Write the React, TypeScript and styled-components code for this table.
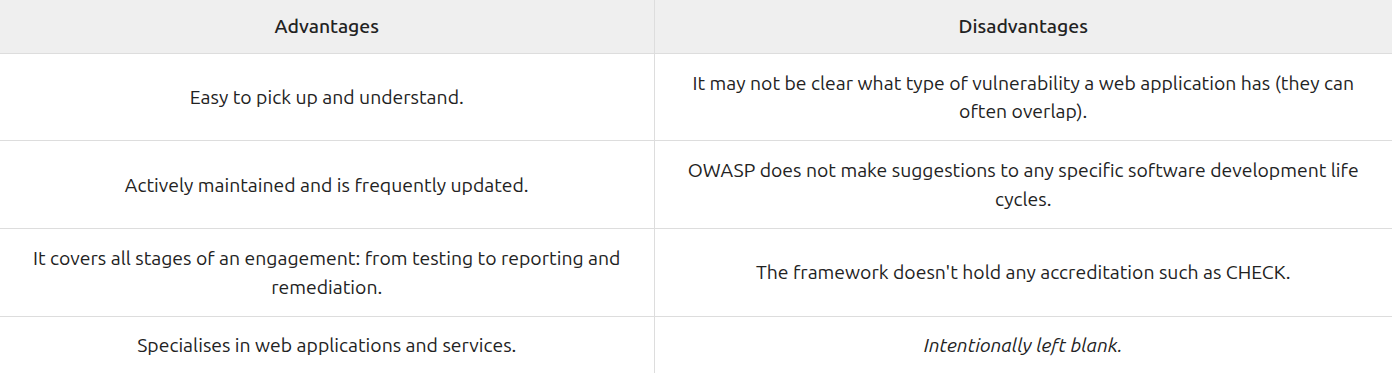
import React, { FC } from "react";
import styled, { createGlobalStyle } from "styled-components";

const GlobalStyle = createGlobalStyle`
  body {
    margin: 0;
    background: #ffffff;
    font-family: Ubuntu, "Lato", "Liberation Sans", sans-serif;
  }
`;

type Row = { pro: string; con: string; conItalic?: boolean };

const rows: Row[] = [
  {
    pro: "Easy to pick up and understand.",
    con: "It may not be clear what type of vulnerability a web application has (they can often overlap).",
  },
  {
    pro: "Actively maintained and is frequently updated.",
    con: "OWASP does not make suggestions to any specific software development life cycles.",
  },
  {
    pro: "It covers all stages of an engagement: from testing to reporting and remediation.",
    con: "The framework doesn't hold any accreditation such as CHECK.",
  },
  {
    pro: "Specialises in web applications and services.",
    con: "Intentionally left blank.",
    conItalic: true,
  },
];

const App: FC = () => {
  return (
    <>
      <GlobalStyle />
      <Table>
        <colgroup>
          <col style={{ width: "654px" }} />
          <col />
        </colgroup>
        <thead>
          <tr>
            <HeadCell>Advantages</HeadCell>
            <HeadCell>Disadvantages</HeadCell>
          </tr>
        </thead>
        <tbody>
          {rows.map((row) => (
            <tr key={row.pro}>
              <Cell>{row.pro}</Cell>
              <Cell $italic={row.conItalic}>{row.con}</Cell>
            </tr>
          ))}
        </tbody>
      </Table>
    </>
  );
};

export default App;

const Table = styled.table`
  width: 1392px;
  border-collapse: collapse;
  table-layout: fixed;
  color: #222222;
  font-size: 19.4px;
  line-height: 28.8px;
`;
const HeadCell = styled.th`
  background: #efefef;
  font-weight: 500;
  padding: 11.5px 16px 12.5px;
  text-align: center;
  border-bottom: 1px solid #dddddd;
  & + & {
    border-left: 1px solid #dddddd;
  }
`;
const Cell = styled.td<{ $italic?: boolean }>`
  padding: 14.9px 24px 14.1px;
  text-align: center;
  vertical-align: middle;
  font-style: ${({ $italic }) => ($italic ? "italic" : "normal")};
  border-bottom: 1px solid #dddddd;
  & + & {
    border-left: 1px solid #dddddd;
  }
`;
